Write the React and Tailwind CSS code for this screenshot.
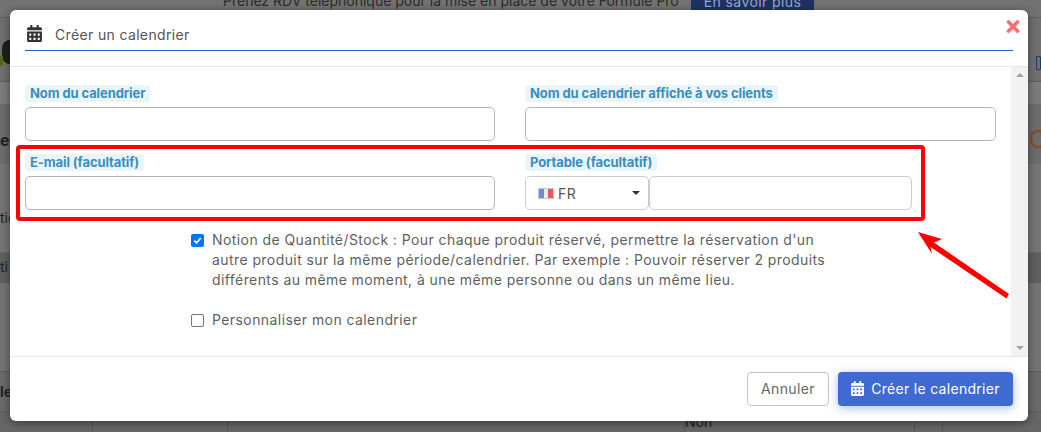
import React from "react";

const Cal = ({ className, color = "currentColor" }) => (
  <svg viewBox="0 0 448 512" className={className} fill={color}>
    <path d="M0 464c0 26.5 21.5 48 48 48h352c26.500 0 48-21.500 48-48V192H0v272zm320-196c0-6.600 5.400-12 12-12h40c6.600 0 12 5.400 12 12v40c0 6.600-5.400 12-12 12h-40c-6.600 0-12-5.400-12-12v-40zm0 128c0-6.600 5.400-12 12-12h40c6.600 0 12 5.400 12 12v40c0 6.600-5.400 12-12 12h-40c-6.600 0-12-5.400-12-12v-40zM192 268c0-6.600 5.400-12 12-12h40c6.600 0 12 5.400 12 12v40c0 6.600-5.400 12-12 12h-40c-6.600 0-12-5.400-12-12v-40zm0 128c0-6.600 5.400-12 12-12h40c6.600 0 12 5.400 12 12v40c0 6.600-5.400 12-12 12h-40c-6.600 0-12-5.400-12-12v-40zM64 268c0-6.600 5.400-12 12-12h40c6.600 0 12 5.400 12 12v40c0 6.600-5.400 12-12 12H76c-6.600 0-12-5.400-12-12v-40zm0 128c0-6.600 5.400-12 12-12h40c6.600 0 12 5.400 12 12v40c0 6.600-5.400 12-12 12H76c-6.600 0-12-5.400-12-12v-40zM400 64h-48V16c0-8.800-7.200-16-16-16h-32c-8.800 0-16 7.200-16 16v48H160V16c0-8.800-7.200-16-16-16h-32c-8.800 0-16 7.200-16 16v48H48C21.500 64 0 85.500 0 112v48h448v-48c0-26.500-21.500-48-48-48z" />
  </svg>
);

const Label = ({ children }) => (
  <div className="flex h-[17px] mb-[5px]">
    <span className="px-[5px] rounded-[3px] bg-[#eaf5fb] text-[#3c8dbc] text-[13px] font-bold leading-[17px] tracking-[-0.1px] whitespace-nowrap">
      {children}
    </span>
  </div>
);

const Input = () => (
  <div className="h-[34px] rounded-[5px] border border-[#b5b5b5] bg-white" />
);

function Backdrop() {
  return (
    <div className="absolute inset-0 flex flex-col">
      <div className="h-[18px] bg-[#727272] border-b border-[#5d6b22]" />
      <div className="h-[65px] bg-[#6f6f6f] border-b border-[#5d6b22]" />
      <div className="h-[22px] bg-[#7b7b7b]" />
      <div className="h-[60px] bg-[#6c6c6c]" />
      <div className="h-[90px] bg-[#757575] border-b border-[#666666]" />
      <div className="h-[30px] bg-[#5f5f5f]" />
      <div className="h-[90px] bg-[#737373] border-b border-[#5a5a5a]" />
      <div className="h-[40px] bg-[#6a6a6a] border-b border-[#5a5a5a]" />
      <div className="flex-1 bg-[#666666] flex text-[14px] text-[#222222]">
        <div className="w-[93px] border-r border-[#555555]" />
        <div className="w-[135px] border-r border-[#555555]" />
        <div className="w-[457px] border-r border-[#555555]" />
        <div className="w-[230px] leading-[20px] border-r border-[#555555]">Non</div>
        <div className="w-[28px] border-r border-[#555555]" />
      </div>
    </div>
  );
}

export default function App() {
  return (
    <div className="relative w-[1041px] h-[432px] overflow-hidden bg-[#6e6e6e] font-['Inter','Liberation_Sans',sans-serif]">
      <Backdrop />

      {/* Dimmed page behind the dialog */}
      <div className="absolute left-[223px] top-[-7px] text-[14px] leading-[16px] text-[#2b2b2b] whitespace-nowrap">
        Prenez RDV téléphonique pour la mise en place de votre Formule Pro
      </div>
      <div className="absolute left-[691px] top-[-10px] w-[123px] h-[20px] bg-[#1d3263] text-[#9aa6c4] text-[14px] tracking-[0.4px] leading-[24px] text-center">
        En savoir plus
      </div>
      <div className="absolute left-0 top-[130px] text-[16px] font-bold leading-[20px] text-[#222222]">es</div>
      <div className="absolute left-0 top-[208px] text-[14px] leading-[20px] text-[#222222]">tic</div>
      <div className="absolute left-0 top-[257px] text-[14px] leading-[20px] text-[#222222]">ti</div>
      <div className="absolute left-0 top-[382px] text-[14px] font-bold leading-[20px] text-[#222222]">le</div>
      <div className="absolute left-[2px] top-[40px] w-[8px] h-[24px] rounded-l-full bg-[#1f1f1f]" />
      <div className="absolute left-0 top-[56px] w-[3px] h-[10px] bg-[#4f6b1f]" />
      <div className="absolute left-[1036px] top-[56px] w-[5px] h-[14px] border border-[#1d3a63] rounded-[1px]" />
      <div className="absolute left-[1030px] top-[130px] w-[16px] h-[18px] rounded-full border-[2px] border-[#8a4a1d]" />

      {/* Dialog */}
      <div className="absolute left-[10px] top-[10px] w-[1018px] h-[411px] flex flex-col rounded-[6px] bg-white shadow-[0_2px_8px_rgba(0,0,0,0.45)]">
        <header className="relative h-[57px] shrink-0 px-[15px] pt-[14px] border-b border-[#e5e5e5]">
          <div className="flex items-center h-[27px] border-b border-[#2a5bd7]">
            <Cal className="w-[15px] h-[17px] ml-[2px] mb-[7px]" color="#333333" />
            <span className="ml-[13px] mb-[5px] text-[14px] text-[#555555] tracking-[0.35px]">Créer un calendrier</span>
          </div>
          <svg viewBox="0 0 352 512" className="absolute right-[8px] top-[7px] w-[14px] h-[19px]" fill="#ff6b6b">
            <path d="M242.720 256l100.070-100.070c12.280-12.280 12.280-32.190 0-44.480l-22.240-22.240c-12.280-12.280-32.190-12.280-44.480 0L176 189.280 75.930 89.210c-12.280-12.280-32.190-12.280-44.480 0L9.210 111.450c-12.280 12.280-12.280 32.190 0 44.480L109.280 256 9.210 356.070c-12.280 12.280-12.280 32.190 0 44.480l22.240 22.240c12.280 12.280 32.200 12.280 44.480 0L176 322.720l100.070 100.070c12.280 12.280 32.200 12.280 44.480 0l22.240-22.240c12.280-12.280 12.280-32.190 0-44.480L242.720 256z" />
          </svg>
        </header>

        <div className="relative flex-1 min-h-0 flex">
          <main className="relative flex-1 pl-[15px] pt-[18px] pr-[15px]">
            <div className="grid grid-cols-[470px_471px] gap-x-[30px]">
              <div>
                <Label>Nom du calendrier</Label>
                <Input />
              </div>
              <div>
                <Label>Nom du calendrier affiché à vos clients</Label>
                <Input />
              </div>
            </div>

            <div className="grid grid-cols-[470px_387px] gap-x-[30px] mt-[13px]">
              <div>
                <Label>E-mail (facultatif)</Label>
                <Input />
              </div>
              <div>
                <Label>Portable (facultatif)</Label>
                <div className="flex">
                  <div className="w-[124px] h-[34px] rounded-[5px] border border-[#cccccc] flex items-center pl-[12px] pr-[8px]">
                    <span className="flex w-[16px] h-[11px] mr-[4px] shrink-0 border border-[#c8c8c8]">
                      <span className="flex-1 bg-[#6d8bd6]" />
                      <span className="flex-1 bg-[#ebebeb]" />
                      <span className="flex-1 bg-[#dc5a60]" />
                    </span>
                    <span className="text-[14px] text-[#555555] tracking-[0.4px]">FR</span>
                    <span className="ml-auto w-0 h-0 border-x-[4px] border-x-transparent border-t-[4px] border-t-[#333333]" />
                  </div>
                  <div className="flex-1 h-[34px] rounded-[5px] border border-[#cccccc]" />
                </div>
              </div>
            </div>

            <div className="ml-[166px] mt-[20px] w-[640px] text-[14px] leading-[20px] text-[#5f5f5f] tracking-[0.42px]">
              <div className="flex">
                <span className="w-[13px] h-[13px] mt-[4px] mr-[8px] shrink-0 rounded-[2px] bg-[#0075ff] flex items-center justify-center">
                  <svg viewBox="0 0 12 12" className="w-[11px] h-[11px]" fill="none" stroke="white" strokeWidth="2">
                    <path d="M2.500 6.200 5 8.700 9.500 3.300" />
                  </svg>
                </span>
                <p className="w-[625px]">
                  Notion de Quantité/Stock : Pour chaque produit réservé, permettre la réservation d'un autre produit sur la même période/calendrier. Par exemple : Pouvoir réserver 2 produits différents au même moment, à une même personne ou dans un même lieu.
                </p>
              </div>
              <div className="flex mt-[20px]">
                <span className="w-[13px] h-[13px] mt-[4px] mr-[8px] shrink-0 rounded-[2px] border border-[#767676] bg-white" />
                <p>Personnaliser mon calendrier</p>
              </div>
            </div>

            {/* Red annotation */}
            <div className="absolute left-[6px] top-[78px] w-[909px] h-[76px] rounded-[4px] border-[4px] border-[#ff0000] pointer-events-none" />
            <svg className="absolute left-[900px] top-[160px] pointer-events-none" width="100" height="80" viewBox="0 0 100 80" fill="#ff0000">
              <path d="M8 5 L32 12 L24 15.500 L99 67 L96.500 71.500 L20.500 20 L22 27 Z" />
            </svg>
          </main>

          <aside className="w-[17px] shrink-0 bg-[#f1f1f1] flex flex-col items-center justify-between py-[6px]">
            <span className="w-0 h-0 border-x-[4px] border-x-transparent border-b-[4px] border-b-[#a3a3a3]" />
            <span className="w-0 h-0 border-x-[4px] border-x-transparent border-t-[4px] border-t-[#a3a3a3]" />
          </aside>
        </div>

        <footer className="h-[65px] shrink-0 border-t border-[#e5e5e5] flex items-center justify-end gap-[9px] pr-[15px] pb-[1px]">
          <button className="w-[82px] h-[34px] rounded-[4px] border border-[#c4c4c4] bg-white text-[14px] text-[#666666] tracking-[0.4px]">
            Annuler
          </button>
          <button className="w-[175px] h-[34px] rounded-[4px] bg-[#3f6ad1] text-white text-[14px] tracking-[0.3px] flex items-center justify-center gap-[7px] shadow-[0_2px_10px_rgba(63,106,209,0.45)]">
            <Cal className="w-[13px] h-[15px]" color="#ffffff" />
            Créer le calendrier
          </button>
        </footer>
      </div>
    </div>
  );
}
